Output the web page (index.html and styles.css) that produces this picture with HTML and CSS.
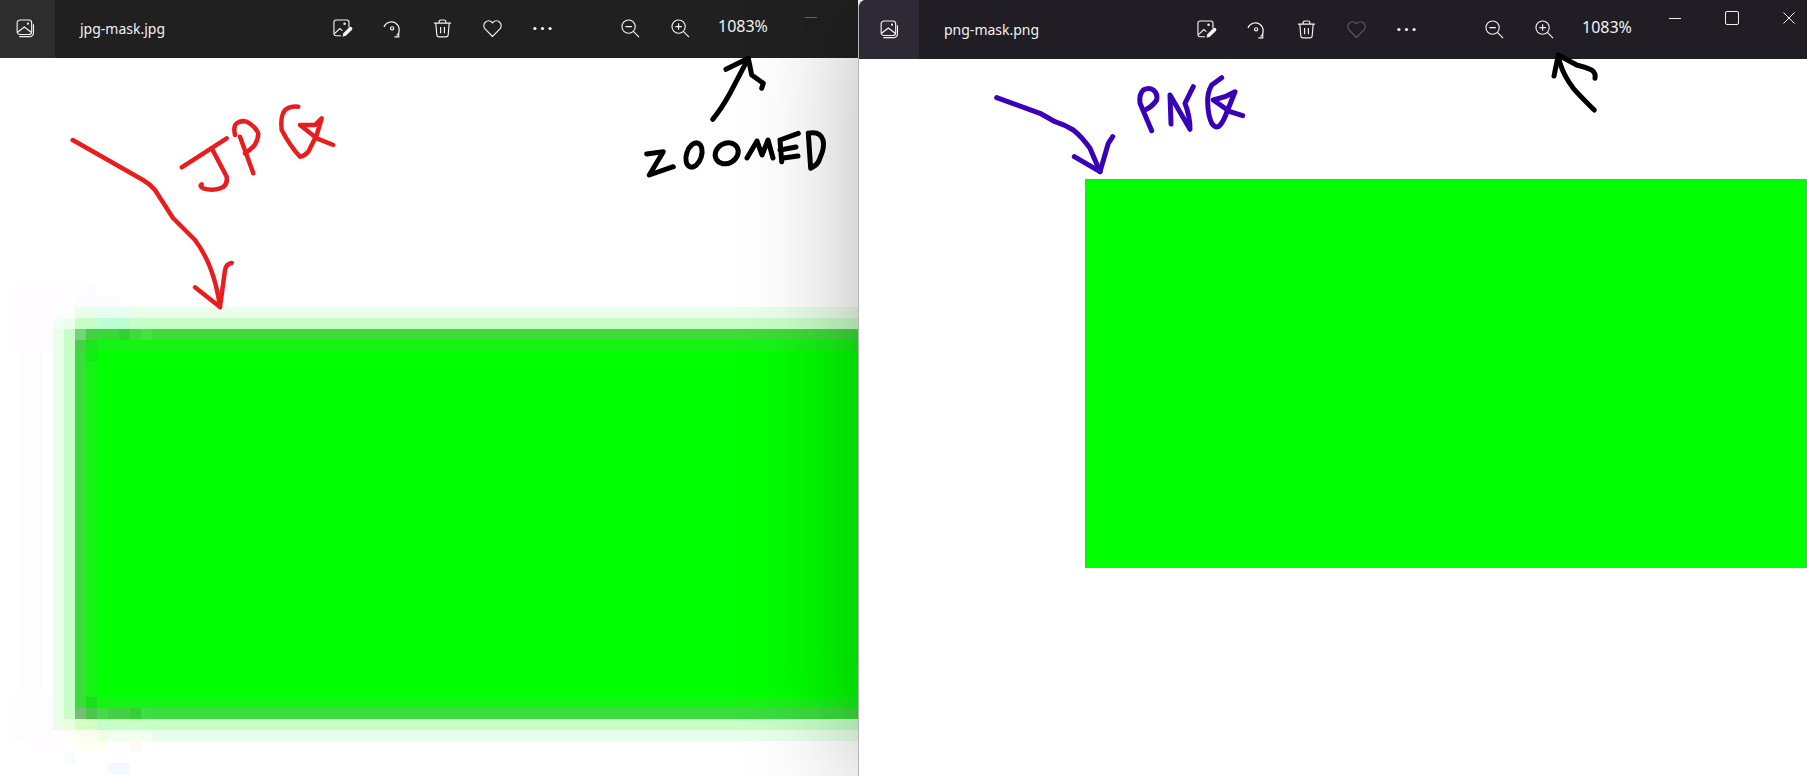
FILE: index.html
```html
<!DOCTYPE html>
<html lang="en">
<head>
<meta charset="utf-8">
<title>Photos: jpg-mask and png-mask</title>
<link rel="stylesheet" href="styles.css">
</head>
<body>
<svg class="defs" width="0" height="0" aria-hidden="true">
  <symbol id="i-photos" viewBox="0 0 20 20">
    <rect x="1.2" y="1" width="15.3" height="15.3" rx="3"/>
    <path d="M3.5 18.6h10.3a4 4 0 0 0 4.6-4.4V5.4"/>
    <path d="M1.6 14 8.8 8.4 16 14"/>
    <circle class="solid" cx="12.6" cy="4.9" r="1.1"/>
  </symbol>
  <symbol id="i-edit" viewBox="0 0 20 20">
    <path d="M8.5 17.6H3.2A2.2 2.2 0 0 1 1 15.4V3.2A2.2 2.2 0 0 1 3.2 1h11.4a2.2 2.2 0 0 1 2.2 2.2v5.6"/>
    <path d="M1.6 15.4 7.2 10l2.6 2.2"/>
    <circle class="solid" cx="12.2" cy="5" r="1.3"/>
    <path class="solid" d="M10 18.8l.9-3.8 6.2-6.2a1.9 1.9 0 0 1 2.7 2.7l-6.2 6.2z"/>
  </symbol>
  <symbol id="i-rotate" viewBox="0 0 20 20">
    <path d="M1 8.4A8.3 8.3 0 1 1 14.4 17.4"/>
    <path d="M16.6 14.2v4.6h-4.6"/>
    <circle cx="9.6" cy="9.8" r="1.7"/>
  </symbol>
  <symbol id="i-trash" viewBox="0 0 20 20">
    <path d="M1 4.4h18M6.4 4.2V3a2 2 0 0 1 2-2h3.2a2 2 0 0 1 2 2v1.2"/>
    <path d="M3 4.6l1 12a2.4 2.4 0 0 0 2.4 2.2h7.2a2.4 2.4 0 0 0 2.4-2.2l1-12"/>
    <path d="M8 8.4v6.6M12 8.4v6.6"/>
  </symbol>
  <symbol id="i-heart" viewBox="0 0 20 20">
    <path d="M10 18.4 2.4 10.6a5 5 0 0 1 0-7.2 5 5 0 0 1 7 0l.6.7.6-.7a5 5 0 0 1 7 0 5 5 0 0 1 0 7.2z"/>
  </symbol>
  <symbol id="i-more" viewBox="0 0 20 20">
    <circle class="solid" cx="2" cy="10" r="1.7"/>
    <circle class="solid" cx="10" cy="10" r="1.7"/>
    <circle class="solid" cx="18" cy="10" r="1.7"/>
  </symbol>
  <symbol id="i-zoom-out" viewBox="0 0 20 20">
    <circle cx="8" cy="8" r="7"/>
    <path d="M13 13l6 6M4.6 8h6.8"/>
  </symbol>
  <symbol id="i-zoom-in" viewBox="0 0 20 20">
    <circle cx="8" cy="8" r="7"/>
    <path d="M13 13l6 6M4.6 8h6.8M8 4.6v6.8"/>
  </symbol>
</svg>

<main class="desktop">
  <section class="window window-back">
    <header class="bar">
      <div class="tile"><svg class="icon"><use href="#i-photos"/></svg></div>
      <div class="title">jpg-mask.jpg</div>
      <div class="tool"><svg class="icon"><use href="#i-edit"/></svg></div>
      <div class="tool"><svg class="icon"><use href="#i-rotate"/></svg></div>
      <div class="tool"><svg class="icon"><use href="#i-trash"/></svg></div>
      <div class="tool"><svg class="icon"><use href="#i-heart"/></svg></div>
      <div class="tool"><svg class="icon"><use href="#i-more"/></svg></div>
      <div class="tool tool-first-zoom"><svg class="icon"><use href="#i-zoom-out"/></svg></div>
      <div class="tool"><svg class="icon"><use href="#i-zoom-in"/></svg></div>
      <div class="zoom-value">1083%</div>
      <div class="caption caption-min caption-dim"></div>
    </header>
    <div class="viewer">
      <svg class="picture" viewBox="-5 58 863 718" width="863" height="718" shape-rendering="crispEdges">
        <rect x="-5" y="58" width="863" height="718" fill="#fff"/>
        <!-- faint JPEG ringing -->
        <rect x="9" y="285" width="66" height="22" fill="#fffdff"/>
        <rect x="75" y="296" width="44" height="11" fill="#fdfbff"/>
        <rect x="86" y="285" width="11" height="11" fill="#fdfbfd"/>
        <rect x="9" y="307" width="44" height="44" fill="#fffcff"/>
        <rect x="20" y="351" width="22" height="350" fill="#fefcff"/>
        <rect x="9" y="696" width="44" height="45" fill="#fefdfe"/>
        <rect x="31" y="730" width="33" height="22" fill="#fffbff"/>
        <rect x="64" y="752" width="11" height="11" fill="#f8fbff"/>
        <rect x="108" y="763" width="22" height="11" fill="#f4f8ff"/>
        <rect x="75" y="741" width="33" height="11" fill="#fffff6"/>
        <rect x="130" y="741" width="11" height="11" fill="#fff9f6"/>
        <!-- outer pale band -->
        <rect x="53" y="307" width="806" height="434" fill="#e9ffe9"/>
        <rect x="53" y="307" width="11" height="11" fill="#fbfffb"/>
        <rect x="64" y="307" width="11" height="11" fill="#fbfffb"/>
        <rect x="53" y="318" width="11" height="11" fill="#f2fff8"/>
        <rect x="97" y="307" width="33" height="11" fill="#e4fff2"/>
        <rect x="53" y="730" width="11" height="11" fill="#fff"/>
        <rect x="64" y="730" width="11" height="11" fill="#fcfff2"/>
        <rect x="75" y="730" width="22" height="11" fill="#fafff0"/>
        <rect x="97" y="730" width="11" height="11" fill="#eeffe4"/>
        <rect x="108" y="730" width="44" height="11" fill="#f0fff0"/>
        <!-- inner pale band -->
        <rect x="64" y="318" width="795" height="412" fill="#c8ffc8"/>
        <rect x="64" y="318" width="11" height="11" fill="#ecffec"/>
        <rect x="97" y="318" width="33" height="11" fill="#bcffd2"/>
        <rect x="64" y="719" width="11" height="11" fill="#eaffe0"/>
        <rect x="75" y="719" width="22" height="11" fill="#d4ffc4"/>
        <!-- dark edge -->
        <rect x="75" y="329" width="784" height="390" fill="#3cdc3c"/>
        <rect x="75" y="329" width="11" height="11" fill="#78d278"/>
        <rect x="86" y="329" width="11" height="11" fill="#44d044"/>
        <rect x="97" y="329" width="22" height="11" fill="#38d838"/>
        <rect x="119" y="329" width="11" height="11" fill="#2cd42c"/>
        <rect x="141" y="329" width="11" height="11" fill="#42e442"/>
        <rect x="75" y="340" width="11" height="11" fill="#48d048"/>
        <rect x="75" y="708" width="11" height="11" fill="#78bc78"/>
        <rect x="86" y="708" width="11" height="11" fill="#48c848"/>
        <rect x="97" y="708" width="11" height="11" fill="#48d848"/>
        <rect x="108" y="708" width="22" height="11" fill="#44d044"/>
        <rect x="130" y="708" width="11" height="11" fill="#34d034"/>
        <rect x="141" y="708" width="11" height="11" fill="#44dc44"/>
        <!-- soft inner edge -->
        <rect x="86" y="340" width="773" height="368" fill="#16f416"/>
        <rect x="86" y="340" width="11" height="11" fill="#18e818"/>
        <rect x="86" y="351" width="11" height="11" fill="#12ec12"/>
        <rect x="86" y="697" width="11" height="11" fill="#18e018"/>
        <!-- solid green -->
        <rect x="97" y="351" width="762" height="346" fill="#00ff00"/>
      </svg>
    </div>
  </section>

  <section class="window window-front">
    <header class="bar bar-front">
      <div class="tile tile-front"><svg class="icon"><use href="#i-photos"/></svg></div>
      <div class="title">png-mask.png</div>
      <div class="tool"><svg class="icon"><use href="#i-edit"/></svg></div>
      <div class="tool"><svg class="icon"><use href="#i-rotate"/></svg></div>
      <div class="tool"><svg class="icon"><use href="#i-trash"/></svg></div>
      <div class="tool tool-dim"><svg class="icon"><use href="#i-heart"/></svg></div>
      <div class="tool"><svg class="icon"><use href="#i-more"/></svg></div>
      <div class="tool tool-first-zoom"><svg class="icon"><use href="#i-zoom-out"/></svg></div>
      <div class="tool"><svg class="icon"><use href="#i-zoom-in"/></svg></div>
      <div class="zoom-value">1083%</div>
      <div class="caption caption-min"></div>
      <div class="caption caption-max"></div>
      <div class="caption caption-close">
        <svg class="close-x" viewBox="0 0 12 12"><path d="M.5.5l11 11M11.500.5l-11 11"/></svg>
      </div>
    </header>
    <div class="viewer">
      <div class="green"></div>
    </div>
  </section>
</main>

<svg class="ink" viewBox="0 0 1807 776" width="1807" height="776" aria-hidden="true">
  <g class="stroke-red">
    <path d="M72.700 140 143 180Q150 184 155 190L173 218Q185 230 195 240 204 252 210 267 217 285 220 307"/>
    <path d="M195 287.300 220 307 225 270Q226 264 231.700 263"/>
    <path d="M181.700 167.300 226.700 138.300"/>
    <path d="M211.700 148.300 226.700 176.700Q228 186 220 188.300 212 191 203.300 188.300 199 186 201.700 184.300"/>
    <path d="M240 136.700 253.300 173.300"/>
    <path d="M235 135Q233 126 236.700 123.300 241 120 246.700 121.700 254 125 258.300 133.300 258 141 253.300 146.700 249 151 245 153.300"/>
    <path d="M298.300 106.700Q290 106 285 110 280 116 281.700 130 290 146 300 156.700 305 156 308.300 151.700L316.700 135 321.700 118.300 315 125 300 125 316.700 138.300 333.300 145"/>
  </g>
  <g class="stroke-black">
    <path d="M712.700 119.300Q722 108 730 93.300L748.300 58.300"/>
    <path d="M726 69.300 748.300 58.300 751.700 75 763.300 83.300 761.700 88.300"/>
    <path d="M646.700 154 663.300 151.700 649.300 175 673.300 166.700"/>
    <ellipse cx="694" cy="155" rx="7.500" ry="12.500" transform="rotate(18 694 155)"/>
    <ellipse cx="726.700" cy="153.300" rx="12" ry="10" transform="rotate(-30 726.700 153.300)"/>
    <path d="M747 158 757 141 762 155 768 140 773 158"/>
    <path d="M780 140 781.700 161.700M780 140 798.300 133.300M780 150 796 147M781.700 158.300 798 156"/>
    <path d="M808.300 133.300 810.700 168.300Q818 165 820 158 825 147 823 140 820 131 808.300 133.300"/>
    <path d="M1594.300 110Q1582 98 1573.300 88.300 1564 76 1560 63.300L1558.300 55"/>
    <path d="M1554 76 1558.300 55 1576.700 65Q1585 67 1591.700 70 1596 73 1595 78.300"/>
  </g>
  <g class="stroke-violet">
    <path d="M996.700 97.700 1040 113.300 1055 121.700Q1065 125 1073.300 130 1082 137 1090 148.300L1100 171.700"/>
    <path d="M1074.300 156.700 1100 171.700 1108.300 143.300 1112.700 136.700"/>
    <path d="M1151.700 130.700 1140 103.300Q1139 94 1143.300 90 1149 87 1153.300 90 1158 94 1156.700 100 1152 107 1145 110"/>
    <path d="M1171 124 1170 95 1190 129.300Q1190 116 1185 103.300L1193.300 86.700"/>
    <path d="M1221.700 77.700 1211.700 85Q1207 93 1207.700 103.300 1208 115 1211.700 123.300 1215 128 1218.300 126.700 1222 124 1225 116.700L1235 91.700 1225 96.700 1213.300 100 1230 111.700 1242.700 115.700"/>
  </g>
</svg>
</body>
</html>
```

FILE: styles.css
```css
* { box-sizing: border-box; }

html, body {
  margin: 0;
  height: 776px;
  overflow: hidden;
  background: #fff;
}

.defs { position: absolute; }

.desktop {
  display: flex;
  width: 1807px;
  height: 776px;
  font-family: "Noto Sans", "Open Sans", sans-serif;
  color: #f2f2f2;
}

.window {
  display: flex;
  flex-direction: column;
  overflow: hidden;
  background: #fff;
}

.window-back {
  flex: 0 0 863px;
  height: 777px;
  margin: -1px 0 0 -5px;
}

.window-front {
  position: relative;
  flex: 0 0 949px;
  height: 776px;
  border-left: 1px solid #b4b4b4;
  border-top-left-radius: 8px;
  box-shadow: 0 0 116px rgba(0, 0, 0, .3);
}

.bar {
  display: flex;
  flex: 0 0 59px;
  align-items: center;
  background: #202020;
}

.bar-front { background: #211d25; }

.tile {
  display: flex;
  flex: 0 0 60px;
  align-self: stretch;
  align-items: center;
  justify-content: center;
  background: #2d2d2d;
}

.tile-front { background: #2e2a35; }

.icon {
  display: block;
  width: 19px;
  height: 19px;
  overflow: visible;
}

.defs symbol {
  overflow: visible;
}

.icon { fill: none; stroke: #f4f4f4; stroke-width: 1.2; }
.defs .solid { fill: #f4f4f4; stroke: none; }

.title {
  flex: 0 0 262px;
  padding-left: 25px;
  font-size: 14px;
  white-space: nowrap;
}

.tool {
  display: flex;
  flex: 0 0 50px;
  justify-content: center;
}

.tool-first-zoom { margin-left: 38px; }
.tool-dim .icon { stroke: #5c5a5e; }

.zoom-value {
  flex: 0 0 50px;
  margin-left: 13px;
  margin-top: -5px;
  font-size: 16px;
  white-space: nowrap;
}

.caption {
  display: flex;
  flex: 0 0 57px;
  align-items: center;
  justify-content: center;
  height: 36px;
  align-self: flex-start;
}

.caption-min { margin-left: 14px; }

.caption-min::before {
  content: "";
  width: 12px;
  height: 1px;
  background: #f0f0f0;
}

.caption-dim::before { background: #6a6a6a; }

.caption-max::before {
  content: "";
  width: 12px;
  height: 12px;
  border: 1px solid #f0f0f0;
  border-radius: 2px;
}

.close-x {
  width: 12px;
  height: 12px;
  fill: none;
  stroke: #f0f0f0;
  stroke-width: 1;
}

.viewer {
  flex: 1;
  padding-top: 120px;
  padding-left: 226px;
  background: #fff;
}

.window-back .viewer { padding: 0; }

.picture { display: block; }

.green {
  width: 722px;
  height: 389px;
  background: #00ff00;
}

.ink {
  position: absolute;
  top: 0;
  left: 0;
  z-index: 2;
  pointer-events: none;
  fill: none;
  stroke-width: 4.500;
  stroke-linecap: round;
  stroke-linejoin: round;
}

.stroke-red { stroke: #e81e1e; }
.stroke-black { stroke: #000; stroke-width: 5; }
.stroke-violet { stroke: #3a00b8; stroke-width: 5; }
```
